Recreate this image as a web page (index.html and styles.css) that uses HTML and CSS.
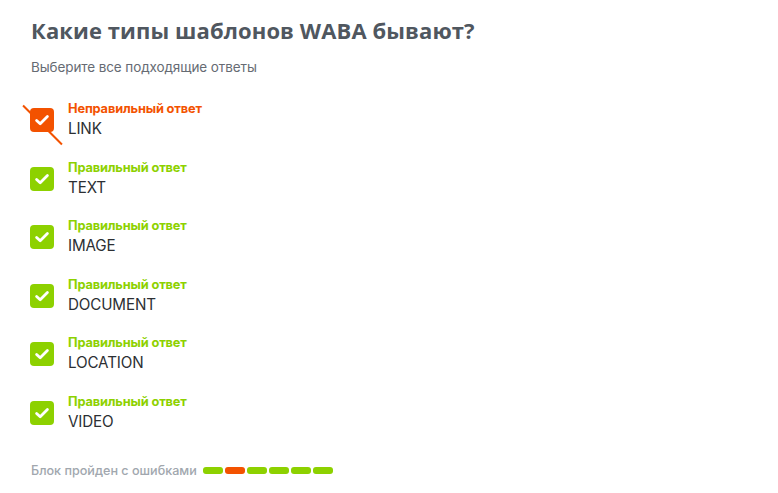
FILE: index.html
```html
<!DOCTYPE html>
<html lang="ru">
<head>
<meta charset="utf-8">
<link rel="stylesheet" href="styles.css">
</head>
<body>
<div class="quiz">
  <h1 class="title">Какие типы шаблонов WABA бывают?</h1>
  <p class="hint">Выберите все подходящие ответы</p>
  <ul class="answers">
    <li class="answer wrong">
      <span class="box">
        <span class="strike"></span>
        <span class="fill"><svg viewBox="0 0 24 24" width="24" height="24"><path d="M6.6 12.4l3.6 3.4L17.4 8.6" fill="none" stroke="#fff" stroke-width="2.8" stroke-linecap="round" stroke-linejoin="round"/></svg></span>
      </span>
      <span class="text"><span class="status">Неправильный ответ</span><span class="value">LINK</span></span>
    </li>
    <li class="answer right">
      <span class="box"><span class="fill"><svg viewBox="0 0 24 24" width="24" height="24"><path d="M6.6 12.4l3.6 3.4L17.4 8.6" fill="none" stroke="#fff" stroke-width="2.8" stroke-linecap="round" stroke-linejoin="round"/></svg></span></span>
      <span class="text"><span class="status">Правильный ответ</span><span class="value">TEXT</span></span>
    </li>
    <li class="answer right">
      <span class="box"><span class="fill"><svg viewBox="0 0 24 24" width="24" height="24"><path d="M6.6 12.4l3.6 3.4L17.4 8.6" fill="none" stroke="#fff" stroke-width="2.8" stroke-linecap="round" stroke-linejoin="round"/></svg></span></span>
      <span class="text"><span class="status">Правильный ответ</span><span class="value">IMAGE</span></span>
    </li>
    <li class="answer right">
      <span class="box"><span class="fill"><svg viewBox="0 0 24 24" width="24" height="24"><path d="M6.6 12.4l3.6 3.4L17.4 8.6" fill="none" stroke="#fff" stroke-width="2.8" stroke-linecap="round" stroke-linejoin="round"/></svg></span></span>
      <span class="text"><span class="status">Правильный ответ</span><span class="value">DOCUMENT</span></span>
    </li>
    <li class="answer right">
      <span class="box"><span class="fill"><svg viewBox="0 0 24 24" width="24" height="24"><path d="M6.6 12.4l3.6 3.4L17.4 8.6" fill="none" stroke="#fff" stroke-width="2.8" stroke-linecap="round" stroke-linejoin="round"/></svg></span></span>
      <span class="text"><span class="status">Правильный ответ</span><span class="value">LOCATION</span></span>
    </li>
    <li class="answer right">
      <span class="box"><span class="fill"><svg viewBox="0 0 24 24" width="24" height="24"><path d="M6.6 12.4l3.6 3.4L17.4 8.6" fill="none" stroke="#fff" stroke-width="2.8" stroke-linecap="round" stroke-linejoin="round"/></svg></span></span>
      <span class="text"><span class="status">Правильный ответ</span><span class="value">VIDEO</span></span>
    </li>
  </ul>
  <div class="result">
    <span class="result-text">Блок пройден с ошибками</span>
    <span class="bars">
      <span class="bar ok"></span><span class="bar bad"></span><span class="bar ok"></span><span class="bar ok"></span><span class="bar ok"></span><span class="bar ok"></span>
    </span>
  </div>
</div>
</body>
</html>
```

FILE: styles.css
```css
* { box-sizing: border-box; }
html, body { margin: 0; padding: 0; background: #fff; }
body { font-family: Inter, "Noto Sans", sans-serif; }

.quiz {
  padding: 14px 0 0 31px;
  display: flex;
  flex-direction: column;
}

.title {
  margin: 0;
  font-family: "Open Sans", "Noto Sans", sans-serif;
  font-weight: 700;
  font-size: 22px;
  line-height: 32px;
  color: #50575f;
  letter-spacing: 0.1px;
}

.hint {
  margin: 12px 0 0;
  font-size: 13.5px;
  line-height: 18px;
  color: #666b73;
  letter-spacing: -0.1px;
}

.answers {
  list-style: none;
  margin: 25px 0 0 -1px;
  padding: 0;
  display: flex;
  flex-direction: column;
  gap: 20.6px;
}

.answer {
  display: flex;
  align-items: center;
  gap: 14px;
}

.box {
  position: relative;
  width: 24px;
  height: 24px;
  flex: none;
  display: flex;
}
.fill {
  position: relative;
  width: 24px;
  height: 24px;
  border-radius: 4px;
  display: flex;
}
.right .fill { background: #8dd100; }
.wrong .fill { background: #f35200; }

.strike {
  position: absolute;
  left: -15px;
  top: 15.5px;
  width: 55px;
  height: 2px;
  background: #f35200;
  transform: rotate(45deg);
  transform-origin: center;
}

.text {
  display: flex;
  flex-direction: column;
  gap: 2px;
}
.status {
  font-size: 12.8px;
  font-weight: 700;
  line-height: 16px;
  letter-spacing: -0.15px;
}
.right .status { color: #8dd100; }
.wrong .status { color: #f35200; }
.value {
  font-size: 15.2px;
  line-height: 20px;
  color: #2c2f33;
  letter-spacing: -0.15px;
}

.result {
  margin-top: 31px;
  display: flex;
  align-items: center;
  gap: 6px;
}
.result-text {
  font-size: 12.6px;
  font-weight: 500;
  color: #a1a7ae;
  line-height: 16px;
}
.bars { display: flex; gap: 2px; }
.bar { width: 20px; height: 7px; border-radius: 3px; }
.bar.ok { background: #8dd100; }
.bar.bad { background: #f35200; }
```
